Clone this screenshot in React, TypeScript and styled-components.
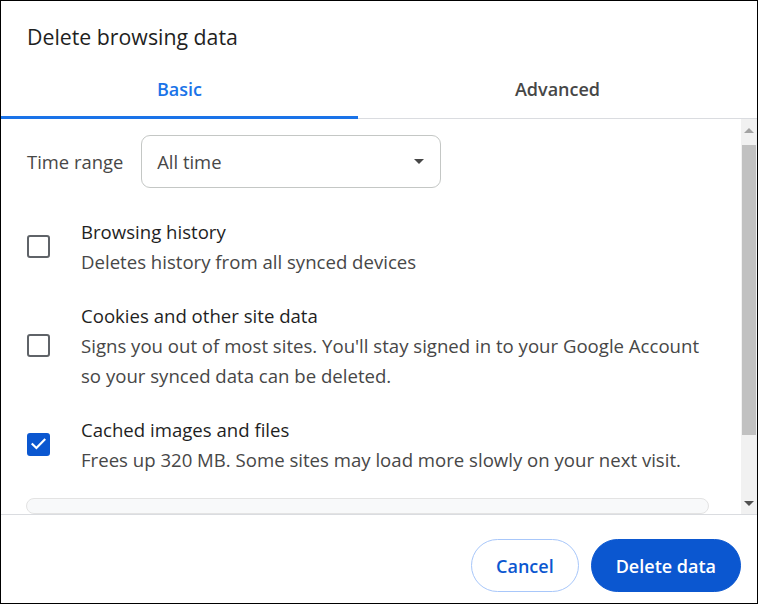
import React from "react";
import styled, { createGlobalStyle } from "styled-components";

const GlobalStyle = createGlobalStyle`
  html, body { margin: 0; padding: 0; background: #fff; }
  body { font-family: "Open Sans", "Noto Sans", sans-serif; }
  * { box-sizing: border-box; }
`;

const Dialog = styled.div`
  width: 758px;
  height: 604px;
  border: 1px solid #000;
  background: #fff;
  display: flex;
  flex-direction: column;
  overflow: hidden;
`;

const Title = styled.h1`
  margin: 0;
  padding: 21px 0 0 26px;
  height: 57px;
  font-size: 21.3px;
  font-weight: 400;
  color: #1f1f1f;
  line-height: 30px;
`;

const TabBar = styled.div`
  display: flex;
  border-bottom: 1px solid #dadce0;
  height: 61px;
`;

const Tab = styled.div<{ $active?: boolean; $width?: string }>`
  flex: ${(p) => (p.$width ? `0 0 ${p.$width}` : "1")};
  display: flex;
  align-items: center;
  justify-content: center;
  padding-top: 4px;
  font-size: 18px;
  font-weight: 600;
  color: ${(p) => (p.$active ? "#1a73e8" : "#474747")};
  border-bottom: 3px solid ${(p) => (p.$active ? "#1a73e8" : "transparent")};
  margin-bottom: -1px;
`;

const Middle = styled.div`
  flex: 1;
  display: flex;
  min-height: 0;
  border-bottom: 1px solid #dadce0;
`;

const Content = styled.div`
  flex: 1;
  overflow: hidden;
  padding: 16px 31px 0 25px;
  display: flex;
  flex-direction: column;
`;

const RangeRow = styled.div`
  display: flex;
  align-items: center;
  gap: 18px;
  padding-left: 1px;
  margin-bottom: 29px;
`;

const Label = styled.span`
  font-size: 18.4px;
  color: #474747;
`;

const Select = styled.div`
  width: 300px;
  height: 53px;
  border: 1px solid #c4c7c5;
  border-radius: 9px;
  display: flex;
  align-items: center;
  justify-content: space-between;
  padding: 0 16px 0 15px;
  font-size: 18.4px;
  color: #474747;
`;

const Caret = styled.span`
  width: 0;
  height: 0;
  border-left: 5px solid transparent;
  border-right: 5px solid transparent;
  border-top: 5px solid #474747;
`;

const Options = styled.div`
  display: flex;
  flex-direction: column;
  gap: 24px;
`;

const Option = styled.div`
  display: flex;
  align-items: center;
`;

const Box = styled.span<{ $checked?: boolean }>`
  flex: 0 0 23px;
  width: 23px;
  height: 23px;
  margin: 0 31px 0 1px;
  position: relative;
  top: -1px;
  border-radius: 3px;
  border: 2px solid ${(p) => (p.$checked ? "#0b57d0" : "#5f6368")};
  background: ${(p) => (p.$checked ? "#0b57d0" : "transparent")};
  display: flex;
  align-items: center;
  justify-content: center;
`;

const OptionText = styled.div`
  display: flex;
  flex-direction: column;
  font-size: 18.6px;
  line-height: 30px;
`;

const OptionTitle = styled.span`
  color: #1f1f1f;
`;

const OptionDesc = styled.span`
  color: #474747;
`;

const InfoBox = styled.div`
  margin-top: 23px;
  height: 40px;
  background: #f8f9fa;
  border: 1px solid #e3e3e3;
  border-radius: 8px;
  margin-right: 1px;
`;

const ScrollBar = styled.div`
  flex: 0 0 16px;
  background: #f1f1f1;
  display: flex;
  flex-direction: column;
`;

const ArrowBtn = styled.div`
  height: 22px;
  display: flex;
  align-items: center;
  justify-content: center;
`;

const ArrowUp = styled.span`
  width: 0;
  height: 0;
  border-left: 5px solid transparent;
  border-right: 5px solid transparent;
  border-bottom: 5px solid #a3a3a3;
`;

const ArrowDown = styled.span`
  width: 0;
  height: 0;
  border-left: 5px solid transparent;
  border-right: 5px solid transparent;
  border-top: 5px solid #505050;
`;

const Track = styled.div`
  flex: 1;
  padding: 4px 1px 0;
`;

const Thumb = styled.div`
  height: 290px;
  background: #c1c1c1;
`;

const Footer = styled.div`
  height: 88px;
  display: flex;
  justify-content: flex-end;
  align-items: flex-start;
  gap: 12px;
  padding: 24px 16px 0 0;
`;

const Button = styled.button<{ $primary?: boolean }>`
  height: 53px;
  padding: 0 24px;
  border-radius: 27px;
  font-family: inherit;
  font-size: 18px;
  font-weight: 600;
  cursor: pointer;
  border: 1px solid ${(p) => (p.$primary ? "#0b57d0" : "#a8c7fa")};
  background: ${(p) => (p.$primary ? "#0b57d0" : "#fff")};
  color: ${(p) => (p.$primary ? "#fff" : "#0b57d0")};
`;

const Check = () => (
  <svg width="15" height="12" viewBox="0 0 15 12" fill="none">
    <path d="M1.5 6.2 L5.4 10 L13.5 1.8" stroke="#fff" strokeWidth="2.2" strokeLinecap="square" />
  </svg>
);

const options = [
  { title: "Browsing history", desc: ["Deletes history from all synced devices"], checked: false },
  {
    title: "Cookies and other site data",
    desc: ["Signs you out of most sites. You'll stay signed in to your Google Account", "so your synced data can be deleted."],
    checked: false,
  },
  { title: "Cached images and files", desc: ["Frees up 320 MB. Some sites may load more slowly on your next visit."], checked: true },
];

export default function App() {
  return (
    <>
      <GlobalStyle />
      <Dialog>
        <Title>Delete browsing data</Title>
        <TabBar>
          <Tab $active $width="357px">Basic</Tab>
          <Tab>Advanced</Tab>
        </TabBar>
        <Middle>
          <Content>
            <RangeRow>
              <Label>Time range</Label>
              <Select>
                <span>All time</span>
                <Caret />
              </Select>
            </RangeRow>
            <Options>
              {options.map((o) => (
                <Option key={o.title}>
                  <Box $checked={o.checked}>{o.checked && <Check />}</Box>
                  <OptionText>
                    <OptionTitle>{o.title}</OptionTitle>
                    {o.desc.map((d) => (
                      <OptionDesc key={d}>{d}</OptionDesc>
                    ))}
                  </OptionText>
                </Option>
              ))}
            </Options>
            <InfoBox />
          </Content>
          <ScrollBar>
            <ArrowBtn><ArrowUp /></ArrowBtn>
            <Track><Thumb /></Track>
            <ArrowBtn><ArrowDown /></ArrowBtn>
          </ScrollBar>
        </Middle>
        <Footer>
          <Button>Cancel</Button>
          <Button $primary>Delete data</Button>
        </Footer>
      </Dialog>
    </>
  );
}
